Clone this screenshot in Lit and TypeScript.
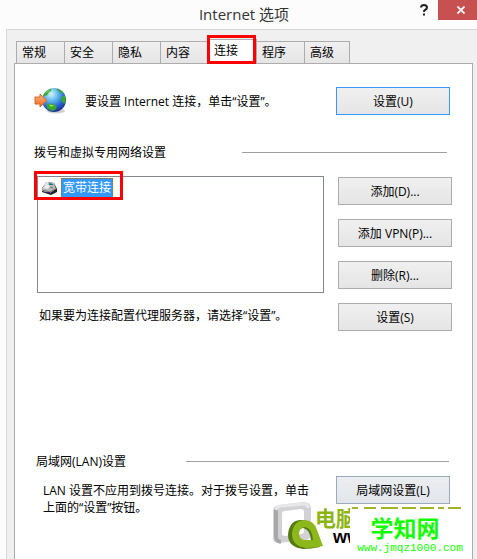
import { LitElement, html, css } from "lit";
import { customElement, state } from "lit/decorators.js";
import { classMap } from "lit/directives/class-map.js";

const TABS = ["常规", "安全", "隐私", "内容", "连接", "程序", "高级"];

@customElement("app-root")
export class AppRoot extends LitElement {
  @state() private active = "连接";

  static styles = css`
    :host {
      display: block;
      height: 100vh;
      overflow: hidden;
      position: relative;
      background: #fcfcfc;
      color: #000;
      font: 12px/17px "Open Sans", "Noto Sans CJK SC", sans-serif;
    }
    * { box-sizing: border-box; }
    p, h1, h2 { margin: 0; font-size: 12px; font-weight: 400; white-space: nowrap; }
    svg { display: block; flex: none; }
    .window { display: flex; flex-direction: column; height: 100%; }
    .titlebar { display: flex; flex: none; height: 29px; padding-left: 78px; }
    .titlebar h1 {
      flex: 1;
      padding-top: 3px;
      text-align: center;
      font-size: 15px;
      line-height: 22px;
      color: #333;
    }
    .titlebar button {
      border: 0;
      padding: 0;
      height: 20px;
      background: none;
      display: flex;
      align-items: center;
      justify-content: center;
    }
    .titlebar .help { width: 28px; }
    .titlebar .close { width: 39px; background: #c75050; padding-left: 6px; }
    .body {
      flex: 1;
      display: flex;
      flex-direction: column;
      margin-left: 6px;
      padding: 7px 4px 0 7px;
      border: solid #d8d8d8;
      border-width: 1px 0 0 1px;
      background: #f0f0f0;
    }
    .tabs { display: flex; align-items: flex-end; height: 26px; padding: 0 2px; }
    .tab {
      position: relative;
      width: 49px;
      height: 22px;
      margin-right: -1px;
      padding: 0 0 0 5px;
      border: 1px solid #acacac;
      border-bottom: 0;
      background: linear-gradient(#f0f0f0, #e5e5e5);
      color: #000;
      font: inherit;
      text-align: left;
    }
    .tab:last-child { width: 46px; }
    .tab.active { height: 24px; background: #fff; padding-bottom: 2px; }
    .mark { position: absolute; border: 3px solid #f00; pointer-events: none; }
    .tab .mark { inset: -5px 0 -1px -2px; }
    .panel {
      flex: 1;
      padding: 23px 20px 0 19px;
      border: solid #acacac;
      border-width: 1px 1px 0;
      background: #fff;
    }
    .btn {
      flex: none;
      width: 114px;
      height: 28px;
      padding: 0;
      border: 1px solid #acacac;
      background: linear-gradient(#f0f0f0, #e5e5e5);
      color: #000;
      font: inherit;
    }
    .btn.primary { border-color: #3399ff; }
    .btn.lan { border-color: #9aabbd; background: linear-gradient(#eceef1, #e2e5ea); }
    .row { display: flex; }
    .setup { align-items: center; margin-right: 2px; }
    .setup p { flex: 1; padding-left: 18px; }
    .heading { display: flex; align-items: center; }
    .heading::after { content: ""; flex: 1; height: 1px; background: #a0a0a0; }
    .dial { margin-top: 29px; margin-right: 5px; gap: 76px; }
    .network { margin-top: 15px; gap: 14px; padding-left: 3px; }
    .left { flex: 1; }
    .list {
      position: relative;
      height: 117px;
      padding: 1px 3px;
      border: 1px solid #828790;
    }
    .item { display: flex; align-items: center; gap: 3px; height: 20px; }
    .item span {
      padding: 0 1px;
      height: 20px;
      line-height: 18px;
      border: 1px dotted #cc6600;
      background: #3399ff;
      color: #fff;
    }
    .list .mark { left: -4px; top: -6px; width: 89px; height: 29px; }
    .left p { padding: 14px 0 0 2px; }
    .stack { display: flex; flex-direction: column; gap: 14px; padding-top: 1px; }
    .lanhead { margin: 122px 3px 0 2px; gap: 60px; }
    .lanrow { justify-content: space-between; margin: 6px 2px 0 9px; }
    .lanrow p { padding-top: 6px; }
    .brand {
      position: absolute;
      left: 272px;
      top: 501px;
      width: 194px;
      height: 58px;
      overflow: hidden;
    }
    .brand .name, .brand .site { position: absolute; white-space: nowrap; }
    .brand .name {
      left: 43px;
      top: 3px;
      font: 700 21px/26px "Noto Sans CJK SC", sans-serif;
      color: #8cb414;
    }
    .brand .site {
      left: 61px;
      top: 27px;
      font: 700 18px/18px "Liberation Sans", sans-serif;
    }
    .brand .tops { position: absolute; left: 80px; top: 6px; }
    .stamp {
      position: absolute;
      left: 78px;
      top: 8px;
      width: 116px;
      height: 50px;
      background: #fff;
      color: #1f0;
      text-align: center;
    }
    .stamp b {
      display: block;
      padding: 6px 6px 0 0;
      font: 700 23px/24px "Noto Sans CJK SC", sans-serif;
    }
    .stamp a {
      display: block;
      padding: 3px 0 0 4px;
      color: inherit;
      text-decoration: none;
      font: 11px/12px "Liberation Mono", monospace;
    }
  `;

  private globe() {
    return html`<svg width="33" height="28" viewBox="0 0 33 28" aria-hidden="true">
      <defs>
        <radialGradient id="sea" cx=".38" cy=".25" r=".8">
          <stop offset="0" stop-color="#d4f6ff" /><stop offset=".4" stop-color="#55b0ec" />
          <stop offset=".75" stop-color="#2458c8" /><stop offset="1" stop-color="#182c80" />
        </radialGradient>
        <linearGradient id="arrow" x2="0" y2="1">
          <stop stop-color="#ffb880" /><stop offset="1" stop-color="#f0641e" />
        </linearGradient>
      </defs>
      <ellipse cx="22" cy="24" rx="9" ry="2.5" fill="#bbb" opacity=".7" />
      <circle cx="20" cy="13" r="12" fill="url(#sea)" />
      <path d="M9 9Q12 3 17 1.500Q18 4 15 5Q14 8 11 9ZM23 1.500Q28 3 30 7L27 6L23 3ZM28 9L31 9Q33 13 30 17L27 13ZM13 17Q19 15 23 20L21 23Q17 25 13 21Z" fill="#3aa82c" />
      <path d="M11 7Q14 3 17 2L14 5ZM15 17.500L20 18.500L17 20Z" fill="#9be25a" />
      <path d="M1 10H6V7L13 13.500L6 20V17H1Z" fill="url(#arrow)" stroke="#d8642c" />
    </svg>`;
  }

  private modem() {
    return html`<svg width="17" height="15" viewBox="0 0 17 15" aria-hidden="true">
      <path d="M1 7L6 1L13 2L16 8V11L10 14L1 11Z" fill="#222" />
      <path d="M1 7L6 1L13 2L15 8L9 12L1 10Z" fill="#b8b8b8" />
      <path d="M2 7L6 3L9 5L7 8ZM3 5L6 1L8 2Z" fill="#ececec" />
      <path d="M8 2L12 3V4H8Z" fill="#088" />
      <path d="M1 9L9 11L14 8M9 6L12 7" stroke="#777" fill="none" />
      <path d="M6 11H9V12H6Z" fill="#22a" />
    </svg>`;
  }

  private brandLogo() {
    return html`<svg width="54" height="50" viewBox="0 0 54 50" aria-hidden="true">
      <path fill-rule="evenodd" d="M7 4L32 1Q38 1 39 7V34Q39 38 34 39L7 42Q1 42 1 36V10Q1 5 7 4ZM13 10Q10 10 10 13V32Q10 35 13 35L29 33Q32 33 32 30V11Q32 8 29 8Z" fill="#d2d2d4" />
      <path d="M4 8V36Q4 40 9 41" fill="none" stroke="#a8a8ac" stroke-width="4" />
      <path d="M4 9Q5 5 9 5L32 3Q36 3 36 7" fill="none" stroke="#e8e8ea" stroke-width="3" />
      <path fill-rule="evenodd" d="M28 19Q40 18 43 29L48 46Q39 48 31 48Q16 46 16 34Q17 20 28 19ZM31 27Q25 28 25 34Q26 40 31 40H39Q38 28 31 27Z" fill="#557a12" />
      <path fill-rule="evenodd" d="M32 19Q42 19 45 29L51 45Q42 47 34 47Q20 45 20 33Q21 20 32 19ZM33 26Q27 27 27 33Q28 39 33 39H41Q40 27 33 26Z" fill="#8db81c" />
    </svg>`;
  }

  render() {
    return html`
      <div class="window">
        <header class="titlebar">
          <h1>Internet 选项</h1>
          <button class="help" aria-label="帮助">
            <svg width="8" height="12" viewBox="0 0 8 12"><path d="M1 3.500Q1 1 4 1T7 3.500Q7 5 5 6Q4 6.500 4 8M4 9.500V11.500" fill="none" stroke="#222" stroke-width="2" /></svg>
          </button>
          <button class="close" aria-label="关闭">
            <svg width="8" height="8" viewBox="0 0 8 8"><path d="M.5 .5L7.500 7.500M7.500 .5L.5 7.500" stroke="#fff" stroke-width="1.800" /></svg>
          </button>
        </header>
        <main class="body">
          <nav class="tabs" role="tablist">
            ${TABS.map((t) => html`<button
              role="tab"
              aria-selected=${t === this.active ? "true" : "false"}
              class=${classMap({ tab: true, active: t === this.active })}
              @click=${() => (this.active = t)}
            >${t}${t === this.active ? html`<i class="mark"></i>` : ""}</button>`)}
          </nav>
          <section class="panel">
            <div class="row setup">
              ${this.globe()}
              <p>要设置 Internet 连接，单击“设置”。</p>
              <button class="btn primary">设置(U)</button>
            </div>
            <h2 class="heading dial">拨号和虚拟专用网络设置</h2>
            <div class="row network">
              <div class="left">
                <div class="list" role="listbox" aria-label="拨号和虚拟专用网络设置">
                  <div class="item" role="option" aria-selected="true">${this.modem()}<span>宽带连接</span></div>
                  <i class="mark"></i>
                </div>
                <p>如果要为连接配置代理服务器，请选择“设置”。</p>
              </div>
              <div class="stack">
                <button class="btn">添加(D)...</button>
                <button class="btn">添加 VPN(P)...</button>
                <button class="btn">删除(R)...</button>
                <button class="btn">设置(S)</button>
              </div>
            </div>
            <h2 class="heading lanhead">局域网(LAN)设置</h2>
            <div class="row lanrow">
              <p>LAN 设置不应用到拨号连接。对于拨号设置，单击<br />上面的“设置”按钮。</p>
              <button class="btn lan">局域网设置(L)</button>
            </div>
          </section>
        </main>
      </div>
      <aside class="brand">
        ${this.brandLogo()}
        <span class="name">电脑</span>
        <span class="site">ww</span>
        <div class="stamp"><b>学知网</b><a href="#">www.jmqz1000.com</a></div>
        <svg class="tops" width="112" height="2" viewBox="0 0 112 2" aria-hidden="true">
          <path d="M0 1H6M12 1H24M29 1H46M50 1H64M68 1H82M86 1H92M96 1H109" stroke="#9fb52c" stroke-width="2" />
        </svg>
      </aside>
    `;
  }
}
